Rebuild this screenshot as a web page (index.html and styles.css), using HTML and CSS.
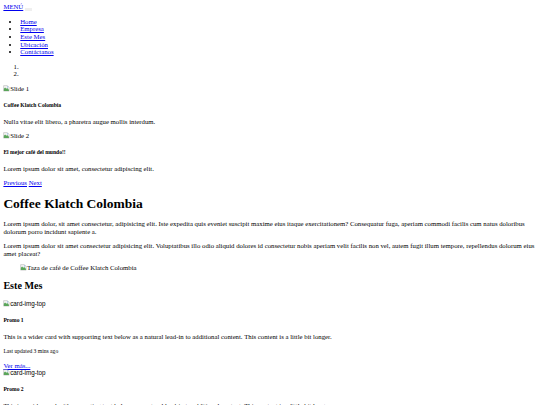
FILE: index.html
```html
<!DOCTYPE html>
<html lang="es">
<head>
<meta charset="utf-8">
<title>Coffee Klatch Colombia</title>
<link rel="stylesheet" href="styles.css">
</head>
<body>
<nav class="navbar">
  <a class="brand" href="#">MENÚ</a>
  <button class="toggler" type="button" aria-label="Menú"><span class="toggler-icon"></span></button>
  <div class="nav-collapse">
    <ul class="nav-list">
      <li><a href="#">Home</a></li>
      <li><a href="#">Empresa</a></li>
      <li><a href="#">Este Mes</a></li>
      <li><a href="#">Ubicación</a></li>
      <li><a href="#">Contáctanos</a></li>
    </ul>
  </div>
</nav>

<div class="carousel">
  <ol class="indicators">
    <li></li>
    <li></li>
  </ol>
  <div class="carousel-inner">
    <div class="carousel-item">
      <span class="broken"><svg class="broken-icon" viewBox="0 0 16 16" width="16" height="16" aria-hidden="true"><path d="M1.5 1.5h9l4 4v9h-13z" fill="#f4f4f4" stroke="#9a9a9a"/><path d="M2 9l3-3 3 3 2-2 4 4v3H2z" fill="#5aa55a"/><circle cx="11" cy="4.5" r="1.3" fill="#7fb0e0"/></svg>Slide 1</span>
      <div class="caption">
        <h5>Coffee Klatch Colombia</h5>
        <p>Nulla vitae elit libero, a pharetra augue mollis interdum.</p>
      </div>
    </div>
    <div class="carousel-item">
      <span class="broken"><svg class="broken-icon" viewBox="0 0 16 16" width="16" height="16" aria-hidden="true"><path d="M1.5 1.5h9l4 4v9h-13z" fill="#f4f4f4" stroke="#9a9a9a"/><path d="M2 9l3-3 3 3 2-2 4 4v3H2z" fill="#5aa55a"/><circle cx="11" cy="4.5" r="1.3" fill="#7fb0e0"/></svg>Slide 2</span>
      <div class="caption">
        <h5>El mejor café del mundo!!</h5>
        <p>Lorem ipsum dolor sit amet, consectetur adipiscing elit.</p>
      </div>
    </div>
  </div>
  <a class="control" href="#">Previous</a>
  <a class="control" href="#">Next</a>
</div>

<main class="content">
  <h1 class="title">Coffee Klatch Colombia</h1>
  <p>Lorem ipsum dolor, sit amet consectetur, adipisicing elit. Iste expedita quis eveniet suscipit maxime eius itaque exercitationem? Consequatur fuga, aperiam commodi facilis cum natus doloribus dolorum porro incidunt sapiente a.</p>
  <p>Lorem ipsum dolor sit amet consectetur adipisicing elit. Voluptatibus illo odio aliquid dolores id consectetur nobis aperiam velit facilis non vel, autem fugit illum tempore, repellendus dolorum eius amet placeat?</p>
  <figure class="figure">
    <span class="broken"><svg class="broken-icon" viewBox="0 0 16 16" width="16" height="16" aria-hidden="true"><path d="M1.5 1.5h9l4 4v9h-13z" fill="#f4f4f4" stroke="#9a9a9a"/><path d="M2 9l3-3 3 3 2-2 4 4v3H2z" fill="#5aa55a"/><circle cx="11" cy="4.5" r="1.3" fill="#7fb0e0"/></svg>Taza de café de Coffee Klatch Colombia</span>
  </figure>

  <h2 class="section-title">Este Mes</h2>
  <div class="card">
    <span class="broken sans"><svg class="broken-icon" viewBox="0 0 16 16" width="16" height="16" aria-hidden="true"><path d="M1.5 1.5h9l4 4v9h-13z" fill="#f4f4f4" stroke="#9a9a9a"/><path d="M2 9l3-3 3 3 2-2 4 4v3H2z" fill="#5aa55a"/><circle cx="11" cy="4.5" r="1.3" fill="#7fb0e0"/></svg>card-img-top</span>
    <div class="card-body">
      <h5 class="card-title">Promo 1</h5>
      <p>This is a wider card with supporting text below as a natural lead-in to additional content. This content is a little bit longer.</p>
      <p><small>Last updated 3 mins ago</small></p>
    </div>
    <a href="#">Ver más...</a>
  </div>
  <div class="card">
    <span class="broken sans"><svg class="broken-icon" viewBox="0 0 16 16" width="16" height="16" aria-hidden="true"><path d="M1.5 1.5h9l4 4v9h-13z" fill="#f4f4f4" stroke="#9a9a9a"/><path d="M2 9l3-3 3 3 2-2 4 4v3H2z" fill="#5aa55a"/><circle cx="11" cy="4.5" r="1.3" fill="#7fb0e0"/></svg>card-img-top</span>
    <div class="card-body">
      <h5 class="card-title">Promo 2</h5>
      <p>This is a wider card with supporting text below as a natural lead-in to additional content. This content is a little bit longer.</p>
      <p><small>Last updated 3 mins ago</small></p>
    </div>
    <a href="#">Ver más...</a>
  </div>
</main>
</body>
</html>
```

FILE: styles.css
```css
html {
  zoom: 0.421875;
}

body {
  margin: 8px;
  font-family: "Liberation Serif", "Times New Roman", serif;
  font-size: 16px;
  line-height: 1.135;
  color: #000;
  background: #fff;
}

a {
  color: #0000ee;
}

.nav-list,
.indicators {
  margin: 16px 0;
  padding-left: 40px;
}

.figure {
  margin: 16px 40px;
}

.broken {
  display: inline-block;
  color: #000;
}

.broken-icon {
  vertical-align: -2px;
}

.sans {
  font-family: "Liberation Sans", Arial, sans-serif;
  font-size: 15px;
}

.card-body small {
  font-size: 13.33px;
}
```
